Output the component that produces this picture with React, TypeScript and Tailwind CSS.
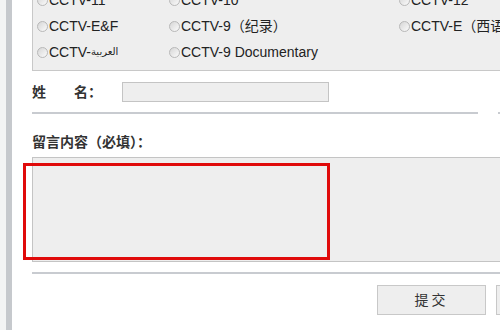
const channels: { label: string; arabic?: string }[][] = [
  [{ label: "CCTV-11" }, { label: "CCTV-10" }, { label: "CCTV-12" }],
  [{ label: "CCTV-E&F" }, { label: "CCTV-9（纪录）" }, { label: "CCTV-E（西语）" }],
  [{ label: "CCTV-", arabic: "العربية" }, { label: "CCTV-9 Documentary" }],
];

const Radio = () => (
  <span className="mr-px inline-block h-[11px] w-[11px] shrink-0 rounded-full border border-[#b8b8b8] bg-gradient-to-br from-[#d6d6d6] to-[#fbfbfb]" />
);

const App = () => {
  return (
    <div
      className="flex h-[330px] w-[500px] overflow-hidden bg-white text-[#222]"
      style={{ fontFamily: '"Liberation Sans", Arial, "Noto Sans CJK SC", sans-serif' }}
    >
      <div className="w-[6px] shrink-0 bg-[#f3f4f4]" />
      <div className="w-[6px] shrink-0 bg-[#c6c9cd]" />

      <div className="w-[640px] shrink-0 pl-[20px]">
        {/* channel picker */}
        <div className="-mt-[20px] w-[540px] border border-[#c8c8c8] bg-[#eeeeee] pt-[6px] pb-[5px] pl-[4px]">
          {channels.map((row, r) => (
            <div key={r} className="grid h-[26px] grid-cols-[132px_230px_1fr] items-center">
              {row.map((c, i) => (
                <label key={i} className="flex items-center text-[14px] leading-[26px]">
                  <Radio />
                  {c.label}
                  {c.arabic && (
                    <span dir="rtl" className="text-[10px]" style={{ fontFamily: '"DejaVu Sans", sans-serif' }}>
                      {c.arabic}
                    </span>
                  )}
                </label>
              ))}
            </div>
          ))}
        </div>

        {/* name */}
        <div className="flex w-[540px] gap-[20px]">
          <div className="w-[446px]">
            <div className="mt-[11px] flex h-[20px] items-center">
              <span className="w-[90px] text-[14px] font-bold text-[#333]">姓　　名：</span>
              <span className="h-[20px] w-[207px] border border-[#c4c4c4] bg-[#eeeeee]" />
            </div>
            <div className="mt-[10px] h-[2px] bg-[#c8cbd0]" />
          </div>
          <div className="flex-1">
            <div className="mt-[11px] h-[20px]" />
            <div className="mt-[10px] h-[2px] bg-[#c8cbd0]" />
          </div>
        </div>

        {/* message */}
        <div className="mt-[18px] h-[20px] text-[14px] leading-[20px] font-bold text-[#333]">留言内容（必填）：</div>
        <div className="relative mt-[5px] h-[105px] w-[540px] border border-[#c4c4c4] bg-[#eeeeee]">
          <div className="absolute -left-[10px] top-[5px] h-[97px] w-[307px] border-[3px] border-[#e00a0a]" />
        </div>
        <div className="mt-[10px] h-[2px] w-[540px] bg-[#c8cbd0]" />

        <div className="mt-[11px] flex gap-[10px] pl-[345px]">
          <button className="h-[30px] w-[109px] shrink-0 border border-[#c8c8c8] bg-[#eeeeee] text-[14px] tracking-[3px] text-[#333]">
            提交
          </button>
          <button className="h-[30px] w-[109px] shrink-0 border border-[#c8c8c8] bg-[#eeeeee] text-[14px] tracking-[3px] text-[#333]">
            重置
          </button>
        </div>
      </div>
    </div>
  );
};

export default App;
